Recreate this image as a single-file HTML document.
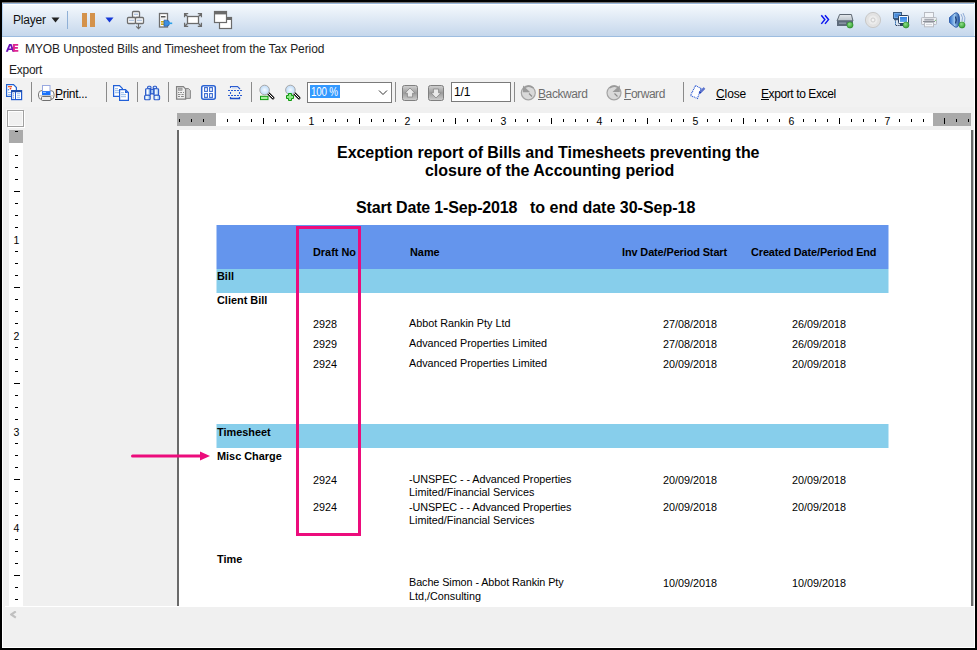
<!DOCTYPE html>
<html><head><meta charset="utf-8">
<style>
*{box-sizing:border-box}
html,body{margin:0;padding:0}
body{width:977px;height:650px;background:#000;position:relative;overflow:hidden;font-family:"Liberation Sans",sans-serif;color:#000}
.a{position:absolute}
.t{position:absolute;white-space:nowrap;line-height:1}
#win{left:2px;top:2px;width:973px;height:646px;background:#fff}
#ptb{left:2px;top:2px;width:973px;height:35px;background:linear-gradient(to bottom,#777 0px,#777 1px,#9ab8dc 1px,#9ab8dc 2px,#fff 2px,#fff 3px,#f4f8fc 3px,#c5d7ec 34px,#9dbde0 34px,#9dbde0 35px)}
.ui{font-size:11.5px;color:#1e1e1e}
.tb{font-size:12px;color:#000}
u{text-decoration:none;border-bottom:1px solid currentColor;display:inline-block;line-height:10px}
.sep{position:absolute;width:1px;background:#8a8a8a;top:82px;height:20px}
.rp{font-size:16px;font-weight:bold}
.hd{font-size:10.9px;font-weight:bold}
.dt{font-size:10.8px}
.rt{position:absolute;background:#000}
.rn{position:absolute;font-size:10px;line-height:1;color:#000}
</style></head><body>
<div id="win" class="a"></div>
<!-- player toolbar -->
<div id="ptb" class="a"></div>
<div class="a" style="left:2px;top:3px;width:1px;height:33px;background:#b5d2f0"></div>
<div class="a" style="left:974px;top:3px;width:1px;height:33px;background:#e8f4ff"></div>
<div class="t" style="left:13px;top:14px;font-size:12px;letter-spacing:-0.2px;color:#111">Player</div>
<svg class="a" style="left:51px;top:17px" width="9" height="6"><path d="M0.5 0.5h8l-4 5z" fill="#222"/></svg>
<div class="a" style="left:67px;top:11px;width:1px;height:18px;background:#8fb0d6"></div>
<div class="a" style="left:82px;top:13px;width:5px;height:14px;background:#d4924b"></div>
<div class="a" style="left:90px;top:13px;width:5px;height:14px;background:#d4924b"></div>
<svg class="a" style="left:105px;top:17px" width="9" height="6"><path d="M0.5 0.5h8l-4 5z" fill="#1538d8"/></svg>

<!-- title row -->
<svg class="a" style="left:0;top:40px" width="24" height="16"><path fill-rule="evenodd" fill="#6a10b8" d="M5.8 11.8L9.1 4H11.5L14.6 11.8H12.5L11.9 10H8.6L8 11.8ZM9.2 8.4H11.3L10.25 5.4Z"/><path fill="#de2490" d="M12.8 4H18.2V5.8H14.9V7.1H17.9V8.7H14.9V10.1H18.3V11.8H12.8Z"/></svg>
<div class="t ui" style="left:25px;top:43px;font-size:12px;letter-spacing:-0.1px">MYOB Unposted Bills and Timesheet from the Tax Period</div>
<div class="t ui" style="left:9px;top:64px;font-size:12px;letter-spacing:-0.25px">Export</div>

<!-- main toolbar -->
<div class="a" style="left:3px;top:78px;width:971px;height:29px;background:#f2f2f2"></div>
<div class="a" style="left:3px;top:107px;width:971px;height:540px;background:#f0f0f0"></div>
<div class="sep" style="left:31px"></div>
<div class="t tb" style="left:55px;top:88px;letter-spacing:-0.3px"><u>P</u>rint...</div>
<div class="sep" style="left:106px"></div>
<div class="sep" style="left:137px"></div>
<div class="sep" style="left:168px"></div>
<div class="sep" style="left:251px"></div>
<div class="a" style="left:307px;top:82px;width:85px;height:21px;background:#fff;border:1px solid #7a7a7a"></div>
<div class="a" style="left:310px;top:85px;width:30px;height:13px;background:#3399ff"></div>
<div class="t" style="left:311px;top:86px;font-size:12px;letter-spacing:-0.3px;color:#fff;transform:scaleX(0.82);transform-origin:0 0">100 %</div>
<svg class="a" style="left:378px;top:89px" width="10" height="7"><path d="M1 1.5l4 4l4-4" fill="none" stroke="#333" stroke-width="1"/></svg>
<div class="sep" style="left:395px"></div>
<div class="a" style="left:451px;top:82px;width:60px;height:20px;background:#fff;border:1px solid #7a7a7a"></div>
<div class="t tb" style="left:454px;top:86px;letter-spacing:-0.1px">1/1</div>
<div class="sep" style="left:514px"></div>
<div class="t tb" style="left:538px;top:88px;letter-spacing:-0.4px;color:#6d6d6d"><u>B</u>ackward</div>
<div class="t tb" style="left:624px;top:88px;letter-spacing:-0.45px;color:#6d6d6d"><u>F</u>orward</div>
<div class="sep" style="left:683px"></div>
<div class="t tb" style="left:716px;top:88px;letter-spacing:-0.1px"><u>C</u>lose</div>
<div class="t tb" style="left:761px;top:88px;letter-spacing:-0.4px"><u>E</u>xport to Excel</div>

<!-- corner box -->
<div class="a" style="left:7px;top:110px;width:17px;height:17px;border:1px solid #a0a0a0;box-shadow:inset 1px 1px 0 0 #fff,inset -1px -1px 0 0 #fafafa,1px 1px 0 0 #fff,-1px -1px 0 0 #f8f8f8;background:#f0f0f0"></div>

<!-- horizontal ruler -->
<div class="a" style="left:177px;top:113px;width:794px;height:13px;background:#fff"></div>
<div class="a" style="left:177px;top:113px;width:39px;height:13px;background:#aaa"></div>
<div class="a" style="left:933px;top:113px;width:38px;height:13px;background:#aaa"></div>
<svg class="a" style="left:177px;top:113px" width="794" height="13" font-family="Liberation Sans" font-size="10.5"><rect x="2" y="6" width="1" height="3"/><rect x="14" y="6" width="1" height="3"/><rect x="26" y="6" width="1" height="3"/><rect x="50" y="6" width="1" height="3"/><rect x="62" y="6" width="1" height="3"/><rect x="74" y="6" width="1" height="3"/><rect x="86" y="5" width="1" height="6"/><rect x="98" y="6" width="1" height="3"/><rect x="110" y="6" width="1" height="3"/><rect x="122" y="6" width="1" height="3"/><rect x="146" y="6" width="1" height="3"/><rect x="158" y="6" width="1" height="3"/><rect x="170" y="6" width="1" height="3"/><rect x="182" y="5" width="1" height="6"/><rect x="194" y="6" width="1" height="3"/><rect x="206" y="6" width="1" height="3"/><rect x="218" y="6" width="1" height="3"/><rect x="242" y="6" width="1" height="3"/><rect x="254" y="6" width="1" height="3"/><rect x="266" y="6" width="1" height="3"/><rect x="278" y="5" width="1" height="6"/><rect x="290" y="6" width="1" height="3"/><rect x="302" y="6" width="1" height="3"/><rect x="314" y="6" width="1" height="3"/><rect x="338" y="6" width="1" height="3"/><rect x="350" y="6" width="1" height="3"/><rect x="362" y="6" width="1" height="3"/><rect x="374" y="5" width="1" height="6"/><rect x="386" y="6" width="1" height="3"/><rect x="398" y="6" width="1" height="3"/><rect x="410" y="6" width="1" height="3"/><rect x="434" y="6" width="1" height="3"/><rect x="446" y="6" width="1" height="3"/><rect x="458" y="6" width="1" height="3"/><rect x="470" y="5" width="1" height="6"/><rect x="482" y="6" width="1" height="3"/><rect x="494" y="6" width="1" height="3"/><rect x="506" y="6" width="1" height="3"/><rect x="530" y="6" width="1" height="3"/><rect x="542" y="6" width="1" height="3"/><rect x="554" y="6" width="1" height="3"/><rect x="566" y="5" width="1" height="6"/><rect x="578" y="6" width="1" height="3"/><rect x="590" y="6" width="1" height="3"/><rect x="602" y="6" width="1" height="3"/><rect x="626" y="6" width="1" height="3"/><rect x="638" y="6" width="1" height="3"/><rect x="650" y="6" width="1" height="3"/><rect x="662" y="5" width="1" height="6"/><rect x="674" y="6" width="1" height="3"/><rect x="686" y="6" width="1" height="3"/><rect x="698" y="6" width="1" height="3"/><rect x="722" y="6" width="1" height="3"/><rect x="734" y="6" width="1" height="3"/><rect x="746" y="6" width="1" height="3"/><rect x="767" y="5" width="1" height="6"/><rect x="779" y="6" width="1" height="3"/><rect x="791" y="6" width="1" height="3"/><text x="134.5" y="12" text-anchor="middle">1</text><text x="230.5" y="12" text-anchor="middle">2</text><text x="326.5" y="12" text-anchor="middle">3</text><text x="422.5" y="12" text-anchor="middle">4</text><text x="518.5" y="12" text-anchor="middle">5</text><text x="614.5" y="12" text-anchor="middle">6</text><text x="710.5" y="12" text-anchor="middle">7</text></svg>

<!-- vertical ruler -->
<div class="a" style="left:9px;top:130px;width:14px;height:476px;background:#fff"></div>
<div class="a" style="left:9px;top:130px;width:14px;height:13px;background:#aaa"></div>
<svg class="a" style="left:9px;top:130px" width="14" height="476" font-family="Liberation Sans" font-size="10.5"><rect x="6" y="1" width="3" height="1"/><rect x="6" y="25" width="3" height="1"/><rect x="6" y="37" width="3" height="1"/><rect x="6" y="49" width="3" height="1"/><rect x="5" y="61" width="6" height="1"/><rect x="6" y="73" width="3" height="1"/><rect x="6" y="85" width="3" height="1"/><rect x="6" y="97" width="3" height="1"/><rect x="6" y="121" width="3" height="1"/><rect x="6" y="133" width="3" height="1"/><rect x="6" y="145" width="3" height="1"/><rect x="5" y="157" width="6" height="1"/><rect x="6" y="169" width="3" height="1"/><rect x="6" y="181" width="3" height="1"/><rect x="6" y="193" width="3" height="1"/><rect x="6" y="217" width="3" height="1"/><rect x="6" y="229" width="3" height="1"/><rect x="6" y="241" width="3" height="1"/><rect x="5" y="253" width="6" height="1"/><rect x="6" y="265" width="3" height="1"/><rect x="6" y="277" width="3" height="1"/><rect x="6" y="289" width="3" height="1"/><rect x="6" y="313" width="3" height="1"/><rect x="6" y="325" width="3" height="1"/><rect x="6" y="337" width="3" height="1"/><rect x="5" y="349" width="6" height="1"/><rect x="6" y="361" width="3" height="1"/><rect x="6" y="373" width="3" height="1"/><rect x="6" y="385" width="3" height="1"/><rect x="6" y="409" width="3" height="1"/><rect x="6" y="421" width="3" height="1"/><rect x="6" y="433" width="3" height="1"/><rect x="5" y="445" width="6" height="1"/><rect x="6" y="457" width="3" height="1"/><rect x="6" y="469" width="3" height="1"/><text x="7.5" y="113.5" text-anchor="middle">1</text><text x="7.5" y="209.5" text-anchor="middle">2</text><text x="7.5" y="305.5" text-anchor="middle">3</text><text x="7.5" y="401.5" text-anchor="middle">4</text></svg>

<!-- page -->
<div class="a" style="left:177px;top:130px;width:796px;height:476px;background:#fff;border-left:2px solid #6a6a6a;border-right:2px solid #6a6a6a"></div>

<div class="a" style="left:973px;top:130px;width:1px;height:476px;background:#c2c2c2"></div>
<!-- bottom scrollbar -->
<div class="a" style="left:5px;top:606px;width:969px;height:1px;background:#fff"></div>
<svg class="a" style="left:10px;top:611px" width="8" height="9"><path d="M5.8 0.4L1.2 3.5L5.8 6.6" fill="none" stroke="#c0c0c0" stroke-width="2.2"/></svg>
<div class="a" style="left:2px;top:647px;width:973px;height:1px;background:#fff"></div>

<!-- report -->
<div class="t rp" style="left:337px;top:145px;letter-spacing:-0.04px">Exception report of Bills and Timesheets preventing the</div>
<div class="t rp" style="left:425px;top:163px;letter-spacing:-0.03px">closure of the Accounting period</div>
<div class="t rp" style="left:356px;top:200px;letter-spacing:-0.15px">Start Date 1-Sep-2018</div>
<div class="t rp" style="left:530px;top:200px">to end date 30-Sep-18</div>

<svg class="a" style="left:0;top:0" width="977" height="650"><rect x="216.5" y="225" width="672" height="44" fill="#6495ed"/><rect x="216.5" y="269" width="672" height="24" fill="#87ceeb"/><rect x="216.5" y="424" width="672" height="24" fill="#87ceeb"/></svg>



<div class="t hd" style="left:313px;top:247px">Draft No</div>
<div class="t hd" style="left:410px;top:247px">Name</div>
<div class="t hd" style="left:622px;top:247px;letter-spacing:-0.1px">Inv Date/Period Start</div>
<div class="t hd" style="left:751px;top:247px;letter-spacing:-0.1px">Created Date/Period End</div>
<div class="t hd" style="left:217px;top:271px">Bill</div>
<div class="t hd" style="left:217px;top:295px">Client Bill</div>
<div class="t hd" style="left:217px;top:427px">Timesheet</div>
<div class="t hd" style="left:217px;top:451px">Misc Charge</div>
<div class="t hd" style="left:217px;top:554px">Time</div>

<div class="t dt" style="left:313px;top:319px">2928</div>
<div class="t dt" style="left:409px;top:318px">Abbot Rankin Pty Ltd</div>
<div class="t dt" style="left:663px;top:319px">27/08/2018</div>
<div class="t dt" style="left:792px;top:319px">26/09/2018</div>
<div class="t dt" style="left:313px;top:339px">2929</div>
<div class="t dt" style="left:409px;top:338px">Advanced Properties Limited</div>
<div class="t dt" style="left:663px;top:339px">27/08/2018</div>
<div class="t dt" style="left:792px;top:339px">26/09/2018</div>
<div class="t dt" style="left:313px;top:359px">2924</div>
<div class="t dt" style="left:409px;top:358px">Advanced Properties Limited</div>
<div class="t dt" style="left:663px;top:359px">20/09/2018</div>
<div class="t dt" style="left:792px;top:359px">20/09/2018</div>

<div class="t dt" style="left:313px;top:475px">2924</div>
<div class="t dt" style="left:409px;top:474px;letter-spacing:-0.07px">-UNSPEC - - Advanced Properties</div>
<div class="t dt" style="left:409px;top:487px">Limited/Financial Services</div>
<div class="t dt" style="left:663px;top:475px">20/09/2018</div>
<div class="t dt" style="left:792px;top:475px">20/09/2018</div>
<div class="t dt" style="left:313px;top:502px">2924</div>
<div class="t dt" style="left:409px;top:502px;letter-spacing:-0.07px">-UNSPEC - - Advanced Properties</div>
<div class="t dt" style="left:409px;top:515px">Limited/Financial Services</div>
<div class="t dt" style="left:663px;top:502px">20/09/2018</div>
<div class="t dt" style="left:792px;top:502px">20/09/2018</div>

<div class="t dt" style="left:409px;top:577px;letter-spacing:-0.07px">Bache Simon - Abbot Rankin Pty</div>
<div class="t dt" style="left:409px;top:591px">Ltd,/Consulting</div>
<div class="t dt" style="left:663px;top:578px">10/09/2018</div>
<div class="t dt" style="left:792px;top:578px">10/09/2018</div>

<!-- magenta box + arrow -->
<div class="a" style="left:296px;top:226px;width:65px;height:310px;border:3px solid #ec0c7c"></div>
<svg class="a" style="left:128px;top:449px" width="84" height="14"><path d="M4.5 7H74" stroke="#ec0c7c" stroke-width="3" stroke-linecap="round"/><path d="M72 2.5L82 7L72 11.5z" fill="#ec0c7c"/></svg>

<!-- ICONS --><svg class="a" style="left:0;top:0" width="977" height="650">
<defs>
<linearGradient id="hddg" x1="0" y1="0" x2="0" y2="1"><stop offset="0" stop-color="#e6eaee"/><stop offset="1" stop-color="#b8c0c8"/></linearGradient>
<linearGradient id="btng" x1="0" y1="0" x2="0" y2="1"><stop offset="0" stop-color="#d2d2d2"/><stop offset="0.5" stop-color="#9c9c9c"/><stop offset="1" stop-color="#d0d0d0"/></linearGradient>
<linearGradient id="spkg" x1="0" y1="0" x2="1" y2="0"><stop offset="0" stop-color="#2a6ac8"/><stop offset="0.5" stop-color="#9cc8f0"/><stop offset="1" stop-color="#1e4e9a"/></linearGradient>
<radialGradient id="grn" cx="0.4" cy="0.35" r="0.7"><stop offset="0" stop-color="#8ee08a"/><stop offset="1" stop-color="#2f9a2c"/></radialGradient>
<linearGradient id="binf" x1="0" y1="0" x2="1" y2="0"><stop offset="0" stop-color="#8fc0f0"/><stop offset="0.4" stop-color="#ffffff"/><stop offset="1" stop-color="#7ab0ea"/></linearGradient>
<linearGradient id="scr" x1="0" y1="0" x2="0" y2="1"><stop offset="0" stop-color="#2f7ee0"/><stop offset="1" stop-color="#66acf2"/></linearGradient>
<radialGradient id="lens" cx="0.5" cy="0.5" r="0.5"><stop offset="0" stop-color="#f4faff"/><stop offset="1" stop-color="#bcdaf8"/></radialGradient>
</defs>
<!-- ===== player toolbar ===== -->
<!-- boxes -->
<g stroke="#6e6e6e" stroke-width="1.3" fill="#fff">
<rect x="132.5" y="11.5" width="7" height="6" rx="1"/>
<rect x="127.5" y="17.5" width="8" height="6" rx="1"/>
<rect x="135.5" y="17.5" width="8" height="6" rx="1"/>
</g>
<g fill="#b4c6e0"><rect x="134" y="13.5" width="4" height="1.6"/><rect x="129" y="19.6" width="5" height="1.6"/><rect x="137" y="19.6" width="5" height="1.6"/></g>
<path d="M138.5 24V28.5M136.2 26.3L138.5 28.6L140.8 26.3" stroke="#6e6e6e" stroke-width="1.1" fill="none"/>
<!-- server plug -->
<rect x="159.5" y="13.5" width="8" height="13.5" fill="#fff" stroke="#6e6e6e" stroke-width="1.3"/>
<rect x="161" y="16" width="4.5" height="1.5" fill="#555"/>
<rect x="161" y="18.6" width="4.5" height="0.8" fill="#d8d8d8"/>
<rect x="161" y="21" width="3" height="1.6" fill="#c9a514"/><rect x="161" y="23.4" width="3" height="1.6" fill="#c9a514"/>
<path d="M164 20.2h2.5a3 3 0 0 1 0 6h-2.5z" fill="#3f8fe0" stroke="#2a5fa8" stroke-width="0.8"/>
<rect x="169" y="22.5" width="3.2" height="1.6" fill="#2aa0e8"/>
<!-- fullscreen -->
<rect x="187.5" y="16.5" width="11" height="7" fill="#fff" stroke="#6b6b6b" stroke-width="1.3"/>
<path d="M184.6 17.2V13.6H188.2M184.8 13.8L187.6 16.6M201.4 17.2V13.6H197.8M201.2 13.8L198.4 16.6M184.6 22.8V26.4H188.2M184.8 26.2L187.6 23.4M201.4 22.8V26.4H197.8M201.2 26.2L198.4 23.4" stroke="#6b6b6b" stroke-width="1.3" fill="none"/>
<!-- windows -->
<rect x="219.5" y="17.5" width="12" height="11" fill="#fff" stroke="#6b6b6b" stroke-width="1.2"/>
<rect x="219" y="17" width="13" height="3" fill="#6b6b6b"/>
<rect x="214.5" y="11.5" width="12" height="11" fill="#fff" stroke="#6b6b6b" stroke-width="1.2"/>
<rect x="214" y="11" width="13" height="3.4" fill="#6b6b6b"/>
<!-- >> -->
<path d="M821.3 15.3L824.8 19.6L821.3 23.9M825 15.3L828.5 19.6L825 23.9" stroke="#0a14f0" stroke-width="1.5" fill="none"/>
<!-- hdd -->
<path d="M839.6 14.5H851.4L853 21H837z" fill="url(#hddg)" stroke="#5e6873" stroke-width="1"/>
<rect x="837" y="20.5" width="16" height="5.5" fill="#5d6b7b"/>
<rect x="839" y="22.4" width="7" height="1.6" fill="#8794a2"/>
<circle cx="850" cy="25" r="3.1" fill="url(#grn)" stroke="#2a8a2a" stroke-width="0.6"/>
<!-- cd -->
<circle cx="873" cy="20" r="7.6" fill="#e2e2e2" stroke="#c8c8c8" stroke-width="1"/>
<circle cx="873" cy="20" r="4.5" fill="#ececec"/>
<circle cx="873" cy="20" r="2" fill="#f4f4f4" stroke="#c4c4c4" stroke-width="0.8"/>
<!-- network -->
<rect x="893.5" y="12.5" width="8" height="6" fill="#6aa6e6" stroke="#3a5a80" stroke-width="1"/>
<rect x="895" y="14" width="5" height="3" fill="#4a8ad8"/>
<rect x="894" y="19" width="4" height="1.2" fill="#3a5a80"/>
<path d="M895.5 20.5V25.5H900" stroke="#1a2a48" stroke-width="1" stroke-dasharray="1 0.8" fill="none"/>
<path d="M895.5 21V25" stroke="#3a90e8" stroke-width="0.5" fill="none"/>
<rect x="898.5" y="15.5" width="10" height="8" rx="0.8" fill="#f4f8fc" stroke="#2a4060" stroke-width="1"/>
<rect x="900" y="17" width="7" height="5" fill="url(#scr)"/>
<rect x="900" y="23.8" width="3" height="2.2" fill="#2a4060"/>
<circle cx="906" cy="25" r="3" fill="url(#grn)" stroke="#2a8a2a" stroke-width="0.6"/>
<!-- printer gray -->
<rect x="924.5" y="12.5" width="9" height="5.5" fill="#f2f5f9" stroke="#b9bcc3" stroke-width="1"/>
<rect x="921.5" y="17.5" width="15" height="7" rx="0.8" fill="#eceef2" stroke="#b9bcc3" stroke-width="1"/>
<rect x="924.3" y="18.8" width="9.5" height="1.8" fill="#a6aab2"/>
<rect x="923" y="21" width="12" height="1" fill="#8c9098"/>
<rect x="924.5" y="22.5" width="9" height="4.3" fill="#f4f6f9" stroke="#b9bcc3" stroke-width="1"/>
<rect x="926" y="24.2" width="6" height="0.8" fill="#c8ccd2"/>
<circle cx="935.4" cy="20.3" r="0.6" fill="#6cc86c"/>
<!-- speaker -->
<path d="M949.5 17.5L955 13Q959.5 11.5 959.5 20Q959.5 28.5 955 27L949.5 22.5Z" fill="url(#spkg)" stroke="#2a5aa8" stroke-width="0.9"/>
<path d="M955.5 16.5Q957 20 955.5 23.5" stroke="#1e3e78" stroke-width="1.4" fill="none"/>
<path d="M961 14Q963.5 18 962 21M963 13Q966 18 964.5 22" stroke="#6b8fc8" stroke-width="0.7" fill="none"/>
<circle cx="962" cy="25" r="3.1" fill="url(#grn)" stroke="#2a8a2a" stroke-width="0.6"/>

<!-- ===== main toolbar ===== -->
<!-- doc+table -->
<path d="M6.6 84.6H13.5L16.4 87.5V96.4H6.6Z" fill="#fff" stroke="#2060d0" stroke-width="1.2"/>
<rect x="8" y="86" width="4" height="1.3" fill="#f05a28"/>
<circle cx="10.5" cy="88.6" r="0.9" fill="#e84020"/>
<circle cx="8.5" cy="89.8" r="0.8" fill="#4a80e0"/>
<rect x="8" y="92" width="3" height="1" fill="#9cbce8"/><rect x="8" y="94" width="3" height="1" fill="#9cbce8"/>
<rect x="11.6" y="90.6" width="10" height="9" fill="#fff" stroke="#1f5ad0" stroke-width="1.2"/>
<rect x="11.2" y="90.2" width="10.8" height="2" fill="#1f4ea8"/>
<path d="M15.5 92V99.5" stroke="#1f5ad0" stroke-width="1"/>
<g fill="#5a84b8"><circle cx="13.5" cy="93.8" r="0.6"/><circle cx="13.5" cy="95.8" r="0.6"/><circle cx="13.5" cy="97.8" r="0.6"/></g>
<g fill="#8cb8f0"><rect x="17" y="93.3" width="3" height="0.9"/><rect x="17" y="95.3" width="3" height="0.9"/><rect x="17" y="97.3" width="3" height="0.9"/></g>
<!-- printer -->
<rect x="38.5" y="90.5" width="15.5" height="9" rx="3.5" fill="#fbfbfb" stroke="#7a7a7a" stroke-width="1"/>
<rect x="42.5" y="85.5" width="7.5" height="6" fill="#fff" stroke="#98a8e0" stroke-width="1"/>
<rect x="42" y="91.2" width="8.5" height="4" fill="#1a72fa"/>
<rect x="43" y="92" width="3" height="1" fill="#8cc0ff"/>
<path d="M39.5 95.8H53" stroke="#b0b0b0" stroke-width="0.8"/>
<rect x="41.5" y="96.5" width="9.5" height="4" rx="1" fill="#ececec" stroke="#707070" stroke-width="1"/>
<!-- copy -->
<path d="M113.6 85.6H119.5L122.4 88.5V96.4H113.6Z" fill="#fff" stroke="#2260d8" stroke-width="1.2"/>
<g fill="#90b8ea"><rect x="115" y="88.2" width="3" height="1"/><rect x="115" y="90.2" width="4" height="1"/><rect x="115" y="92.2" width="4" height="1"/></g>
<path d="M119.6 89.6H125.5L128.4 92.5V100.4H119.6Z" fill="#fff" stroke="#2260d8" stroke-width="1.2"/>
<path d="M125 89.8V93H128.2" fill="#2260d8"/>
<g fill="#90b8ea"><rect x="121" y="92.2" width="3" height="1"/><rect x="121" y="94.2" width="5" height="1"/><rect x="121" y="96.2" width="5" height="1"/></g>
<!-- binoculars -->
<g stroke="#2a58c8" stroke-width="1.1">
<rect x="147.6" y="86.2" width="3.4" height="2.6" rx="1" fill="#cfe6ff"/>
<rect x="153.2" y="86.2" width="3.4" height="2.6" rx="1" fill="#cfe6ff"/>
<rect x="145.6" y="88.8" width="4.8" height="6.6" rx="0.8" fill="url(#binf)"/>
<rect x="153.8" y="88.8" width="4.8" height="6.6" rx="0.8" fill="url(#binf)"/>
<rect x="150.4" y="89.3" width="3.4" height="4.6" fill="#5a8ee0"/>
<rect x="144.6" y="95.3" width="5.6" height="4.4" rx="1" fill="url(#binf)"/>
<rect x="154" y="95.3" width="5.6" height="4.4" rx="1" fill="url(#binf)"/>
</g>
<rect x="151.6" y="90" width="1" height="3" fill="#e8f4ff"/>
<!-- gray doc -->
<path d="M185.5 88.5H188.5L190.4 90.5V98.4H185.5Z" fill="#c8c8c8" stroke="#8a8a8a" stroke-width="1"/>
<path d="M176.6 86.6H183.3L185.6 88.9V99.2H176.6Z" fill="#f0f0f0" stroke="#828282" stroke-width="1.3"/>
<rect x="178.3" y="88" width="3.8" height="2.3" fill="#b0b0b0" stroke="#808080" stroke-width="0.5"/>
<g fill="#8a8a8a"><rect x="178" y="92" width="1.3" height="1"/><rect x="180.2" y="92" width="1.8" height="1"/><rect x="183" y="92" width="1" height="1"/><rect x="178" y="94" width="2.5" height="1"/><rect x="181.5" y="94" width="2.2" height="1"/><rect x="178" y="96" width="2" height="1"/><rect x="181" y="96" width="2.8" height="1"/></g>
<!-- grid -->
<rect x="201.7" y="85.7" width="13.6" height="13.6" rx="2" fill="#fff" stroke="#2a62d2" stroke-width="1.5"/>
<g fill="#fff" stroke="#3a6ad0" stroke-width="1.1"><rect x="204.6" y="87.6" width="2.8" height="3.8"/><rect x="209.6" y="87.6" width="2.8" height="3.8"/><rect x="204.6" y="93.6" width="2.8" height="3.8"/><rect x="209.6" y="93.6" width="2.8" height="3.8"/></g>
<!-- dashed page -->
<path d="M230.5 88V86.5H237.5L240 89" stroke="#2a5cd0" stroke-width="1.1" fill="none"/>
<rect x="232" y="87.5" width="5" height="0.8" fill="#a8c0f0"/>
<path d="M228 90.5H242.5M228 95.5H242.5" stroke="#2a5cd0" stroke-width="1.1" stroke-dasharray="2 1" fill="none"/>
<path d="M230.5 92V94M239.5 92V94" stroke="#2a5cd0" stroke-width="1.1" fill="none"/>
<path d="M230.5 97V98.5H239.5V97" stroke="#2050c8" stroke-width="1.3" fill="none"/>
<!-- zoom out -->
<path d="M268.5 93.5L273 98" stroke="#111" stroke-width="3" stroke-linecap="round"/>
<path d="M268.5 93.5L273 98" stroke="#fff" stroke-width="1" stroke-linecap="round"/>
<circle cx="264.6" cy="90" r="4.8" fill="url(#lens)" stroke="#a8a8a8" stroke-width="1"/>
<rect x="260.5" y="96.3" width="7.5" height="3.3" fill="#a8f0a0" stroke="#0e9a0e" stroke-width="1"/>
<!-- zoom in -->
<path d="M294.5 93.5L299 98" stroke="#111" stroke-width="3" stroke-linecap="round"/>
<path d="M294.5 93.5L299 98" stroke="#fff" stroke-width="1" stroke-linecap="round"/>
<circle cx="290.4" cy="90" r="4.8" fill="url(#lens)" stroke="#a8a8a8" stroke-width="1"/>
<path d="M288.5 93.5H291.5V95.5H293.5V98.5H291.5V100.5H288.5V98.5H286.5V95.5H288.5Z" fill="#8ee88a" stroke="#0e9a0e" stroke-width="1"/>
<!-- up/down buttons -->
<rect x="402.5" y="85.5" width="15" height="15" rx="2" fill="url(#btng)" stroke="#808080" stroke-width="1"/>
<path d="M410 88L415 93.2H412.6V97H407.4V93.2H405Z" fill="#eaeaea" stroke="#858585" stroke-width="0.8"/>
<rect x="428.5" y="85.5" width="15" height="15" rx="2" fill="url(#btng)" stroke="#808080" stroke-width="1"/>
<path d="M436 98L441 92.8H438.6V89H433.4V92.8H431Z" fill="#eaeaea" stroke="#858585" stroke-width="0.8"/>
<!-- backward clock -->
<circle cx="528.3" cy="92.8" r="7" fill="#d9d9d9" stroke="#a4a4a4" stroke-width="1.2"/>
<path d="M523 85.5V92.2H530.2Z" fill="#9a9a9a"/>
<path d="M525 87.5Q529 84.5 533.5 88" stroke="#9a9a9a" stroke-width="1.5" fill="none"/>
<path d="M529 93.5L532 96.5" stroke="#8a8a8a" stroke-width="1.1"/>
<!-- forward clock -->
<circle cx="614" cy="92.8" r="7" fill="#d9d9d9" stroke="#a4a4a4" stroke-width="1.2"/>
<path d="M619.8 85.2V92H612.5Z" fill="#9a9a9a"/>
<path d="M609.5 88Q614 84.5 618 87.5" stroke="#9a9a9a" stroke-width="1.5" fill="none"/>
<path d="M614.5 93.5L617.5 96.5" stroke="#8a8a8a" stroke-width="1.1"/>
<!-- close -->
<path d="M695.5 85.5L701 88.5L697.5 98.5L690.5 95.5Z" fill="#fff" stroke="#2050d0" stroke-width="1.1" stroke-dasharray="1 0.8"/>
<path d="M699.5 93L704.5 88" stroke="#1a3ab8" stroke-width="2.2"/>
<path d="M700.5 92L705 87.5" stroke="#fff" stroke-width="0.6"/>
</svg>
<!-- /ICONS -->
</body></html>
